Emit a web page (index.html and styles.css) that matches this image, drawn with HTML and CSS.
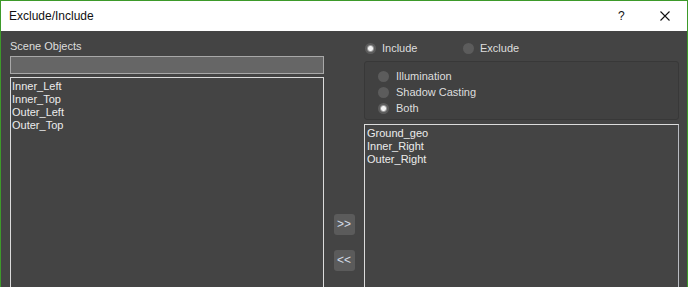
FILE: index.html
```html
<!DOCTYPE html>
<html lang="en">
<head>
    <meta charset="UTF-8">
    <title>Exclude/Include</title>
    <link rel="stylesheet" href="styles.css">
</head>
<body>
    <div class="window">
        <div class="titlebar">
            <div class="title">Exclude/Include</div>
            <div class="help">?</div>
            <div class="close">
                <svg width="10" height="10" viewBox="0 0 10 10"><path d="M0.5 0.5 L9.5 9.5 M9.5 0.5 L0.5 9.5" stroke="#111" stroke-width="1.1" fill="none"/></svg>
            </div>
        </div>

        <div class="content">
            <div class="left">
                <div class="label">Scene Objects</div>
                <div class="search"></div>
                <div class="list">
                    <div class="item">Inner_Left</div>
                    <div class="item">Inner_Top</div>
                    <div class="item">Outer_Left</div>
                    <div class="item">Outer_Top</div>
                </div>
            </div>

            <div class="middle">
                <div class="btn">&gt;&gt;</div>
                <div class="btn">&lt;&lt;</div>
            </div>

            <div class="right">
                <div class="mode">
                    <div class="radio-row wide"><span class="radio on"></span>Include</div>
                    <div class="radio-row"><span class="radio"></span>Exclude</div>
                </div>
                <div class="group">
                    <div class="radio-row"><span class="radio"></span>Illumination</div>
                    <div class="radio-row"><span class="radio"></span>Shadow Casting</div>
                    <div class="radio-row"><span class="radio on"></span>Both</div>
                </div>
                <div class="list right-list">
                    <div class="item">Ground_geo</div>
                    <div class="item">Inner_Right</div>
                    <div class="item">Outer_Right</div>
                </div>
            </div>
        </div>
    </div>
</body>
</html>
```

FILE: styles.css
```css
*{margin: 0;
    padding: 0;
    box-sizing: border-box;
}
body{
    width: 688px;
    height: 287px;
    overflow: hidden;
    background-color: #444444;
    font-family: "Liberation Sans", Arial, sans-serif;
}
.window{
    width: 688px;
    height: 287px;
    border: 1px solid #3d9a2a;
    border-bottom: none;
    overflow: hidden;
}
.titlebar{
    height: 30px;
    background-color: #ffffff;
    display: flex;
    align-items: center;
    padding-left: 8px;
    color: #111;
    font-size: 12px;
}
.title{
    flex: 1;
    margin-top: -1px;
}
.help{
    width: 12px;
    margin-right: 30px;
    margin-top: -1px;
}
.close{
    width: 10px;
    height: 10px;
    margin-right: 17px;
    display: flex;
}
.content{
    display: grid;
    grid-template-columns: 314px 40px 315px;
    padding: 9px 8px 0 9px;
    height: 256px;
    color: #dedede;
    font-size: 11px;
    line-height: 13px;
}
.label{
    height: 13px;
    margin-bottom: 3px;
}
.search{
    height: 18px;
    background-color: #666666;
    border: 1px solid #a8a8a8;
    margin-bottom: 3px;
}
.list{
    height: 240px;
    border: 1px solid #dcdcdc;
    padding: 2px 1px;
    color: #ececec;
}
.middle{
    display: flex;
    flex-direction: column;
    align-items: center;
    padding-top: 174px;
    gap: 15px;
}
.btn{
    width: 21px;
    height: 21px;
    border-radius: 3px;
    background-color: #5b5b5b;
    color: #d3dce6;
    font-size: 12px;
    line-height: 20px;
    text-align: center;
}
.mode{
    display: flex;
    margin: 2px 0 5px 1px;
    height: 14px;
}
.radio-row{
    display: flex;
    align-items: center;
    height: 16px;
}
.mode .radio-row{
    height: 13px;
}
.mode .radio{
    margin-right: 6px;
    margin-top: -1px;
}
.wide{
    width: 98px;
}
.radio{
    width: 11px;
    height: 11px;
    border-radius: 50%;
    background-color: #5c5c5c;
    margin-right: 7px;
}
.radio.on{
    background: radial-gradient(circle, #f2f2f2 0, #f2f2f2 2px, #9a9a9a 3px, #5c5c5c 4px);
}
.group{
    height: 59px;
    border: 1px solid #383838;
    border-radius: 3px;
    background-color: #414141;
    padding: 6px 0 0 13px;
    margin-bottom: 4px;
}
.right-list{
    padding: 2px 2px;
    border-right-color: #b9bcc2;
}
```
